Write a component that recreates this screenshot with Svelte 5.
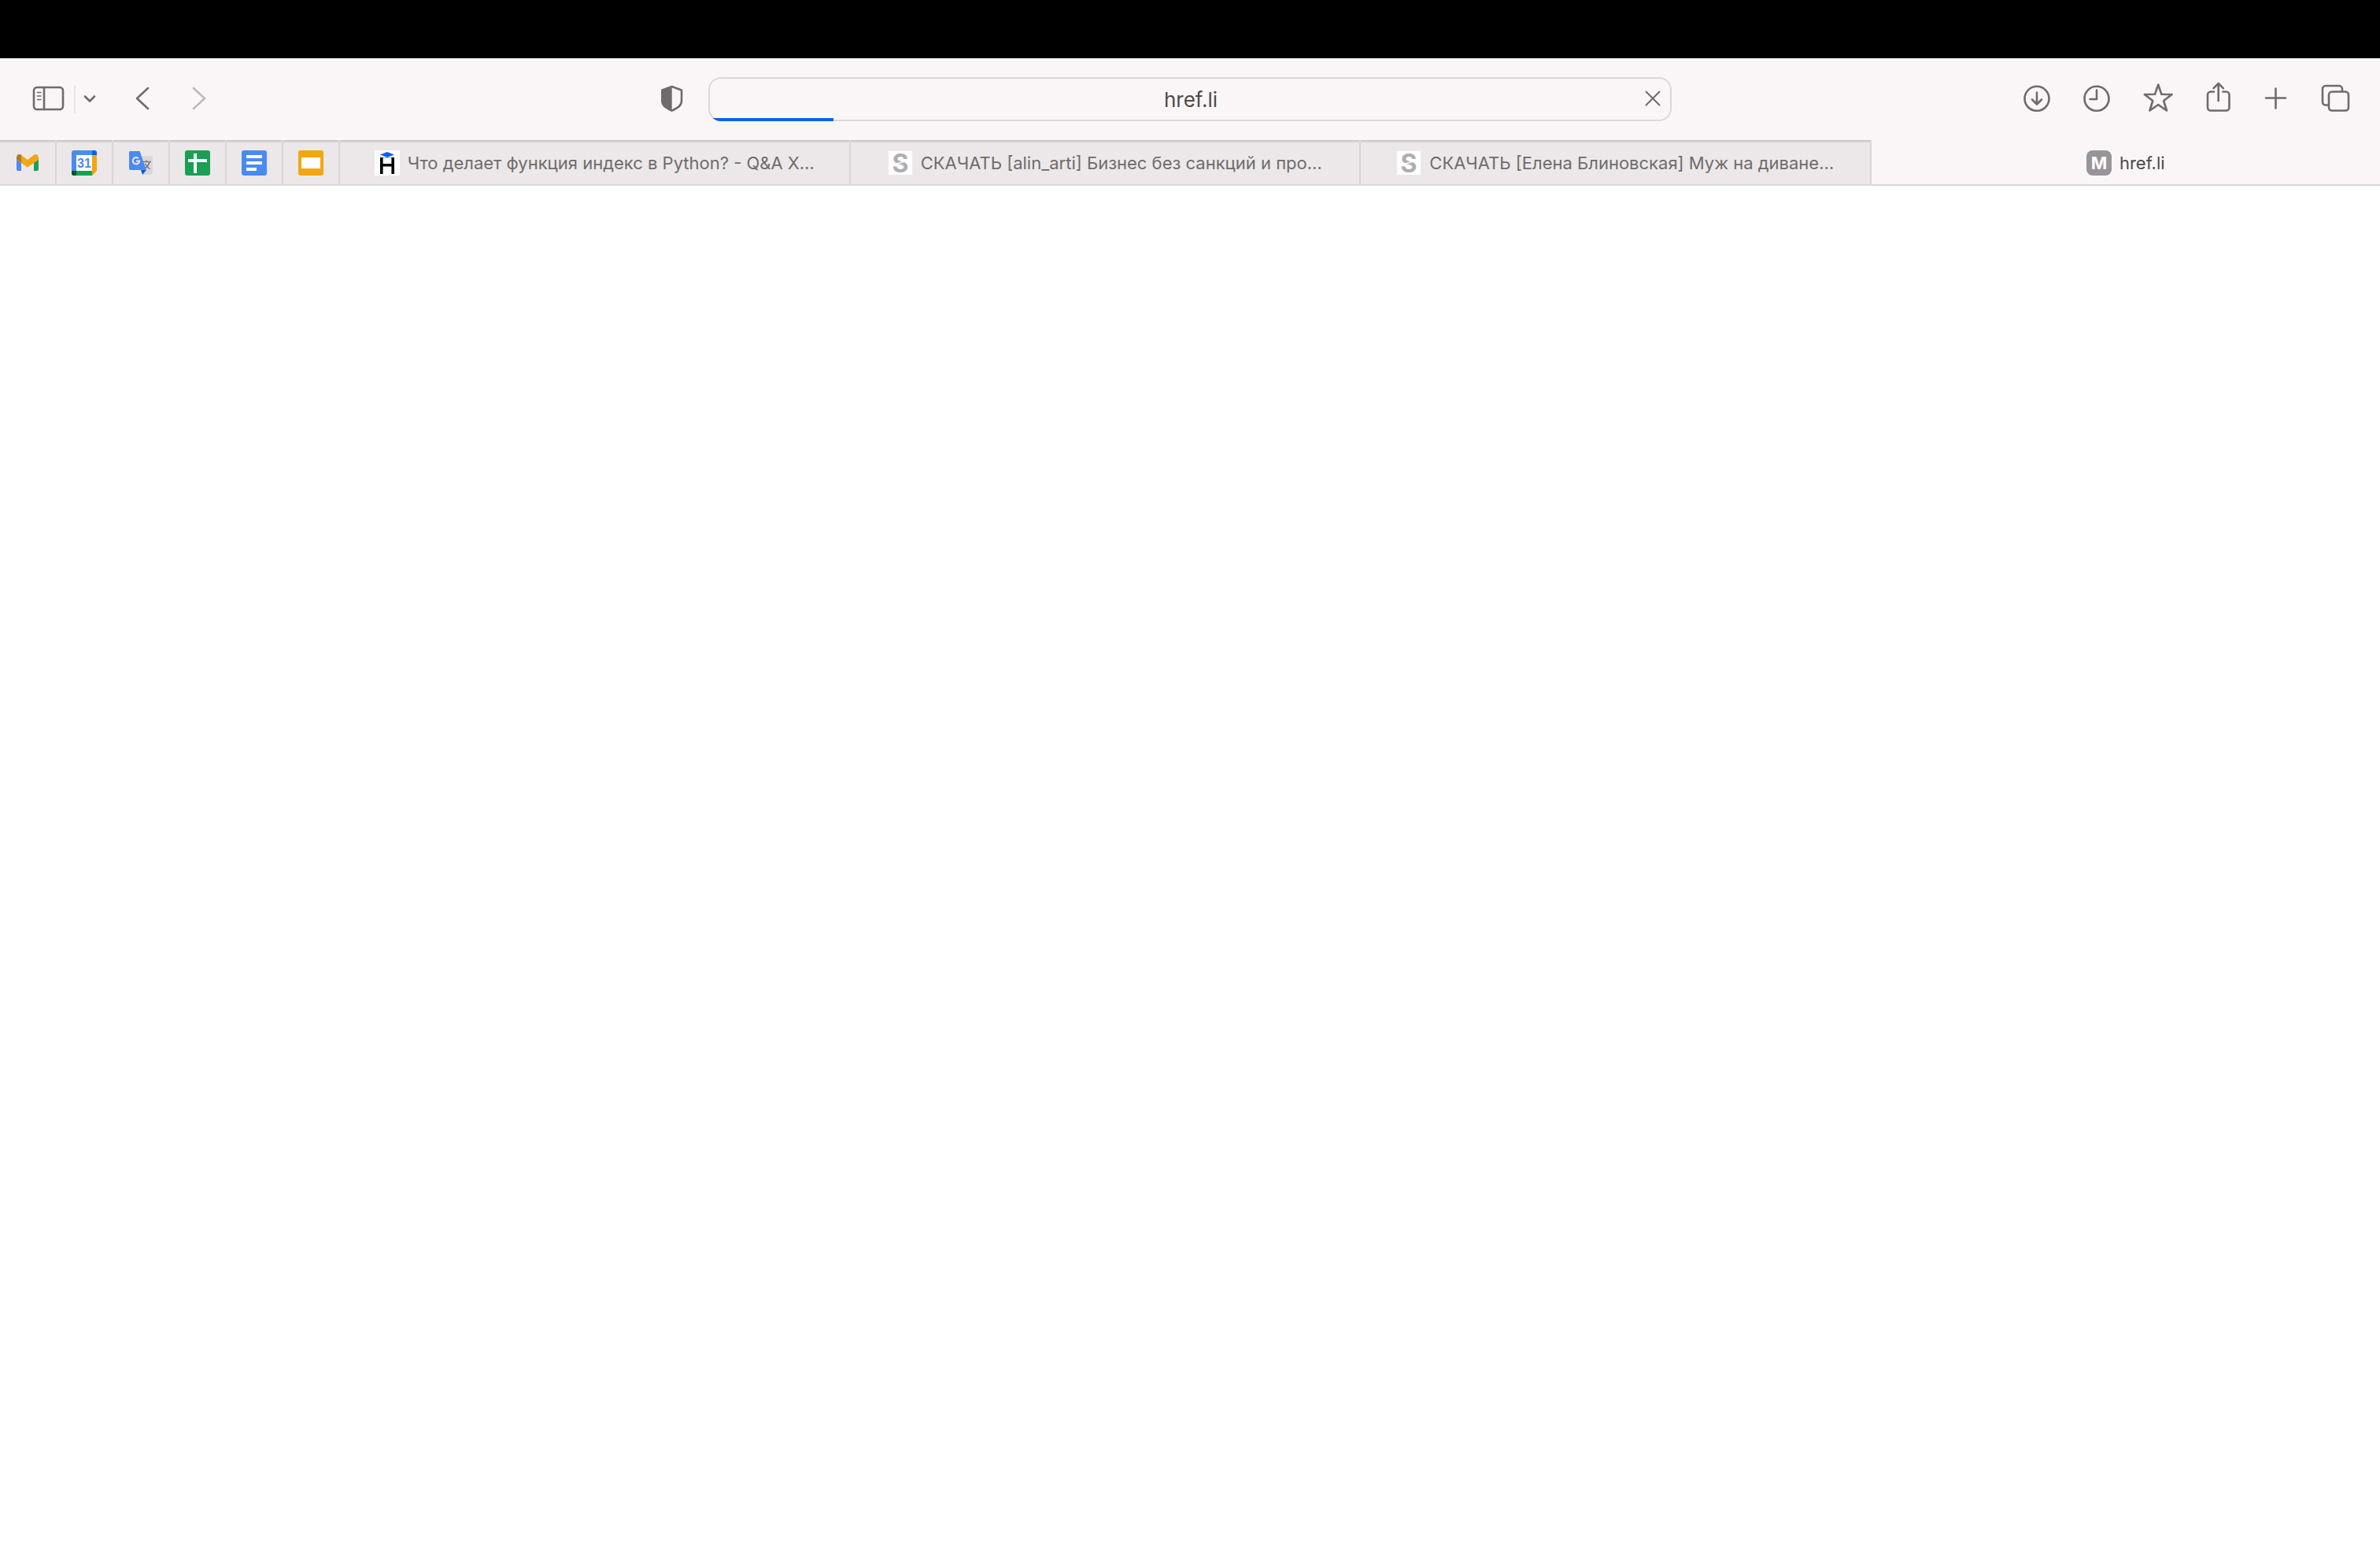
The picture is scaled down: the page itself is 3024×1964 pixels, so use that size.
<script lang="ts">
	type Tab = { id: number; title: string; icon: 'hexlet' | 'skladchik' | 'letter' };

	const pinned = ['Gmail', 'Calendar', 'Translate', 'Sheets', 'Docs', 'Slides'];

	const tabs: Tab[] = [
		{ id: 1, title: 'Что делает функция индекс в Python? - Q&A X…', icon: 'hexlet' },
		{ id: 2, title: 'СКАЧАТЬ [alin_arti] Бизнес без санкций и про…', icon: 'skladchik' },
		{ id: 3, title: 'СКАЧАТЬ [Елена Блиновская] Муж на диване…', icon: 'skladchik' },
		{ id: 4, title: 'href.li', icon: 'letter' }
	];

	let activeTabId = $state(4);
	let address = $state('href.li');
	let loaded = $state(13);
</script>

<div class="browser">
	<div class="notch"></div>

	<header class="toolbar">
		<div class="side left">
			<button class="tool" aria-label="Show sidebar">
				<svg class="icon" viewBox="0 0 44 44">
					<rect x="3" y="7" width="37" height="28" rx="4" />
					<path d="M16 7v28" />
					<path class="thin" d="M7.500 13.500h4.500M7.500 18h4.500M7.500 22.500h4.500" />
				</svg>
			</button>
			<span class="divider"></span>
			<button class="tool" aria-label="Tab groups">
				<svg class="icon small" viewBox="0 0 28 44">
					<path d="M8 18.500l6 6 6-6" />
				</svg>
			</button>
			<button class="tool back" aria-label="Back">
				<svg class="icon" viewBox="0 0 44 44"><path d="M28 8L14 21l14 13" /></svg>
			</button>
			<button class="tool forward" aria-label="Forward" disabled>
				<svg class="icon" viewBox="0 0 44 44"><path d="M14 8l14 13-14 13" /></svg>
			</button>
			<button class="tool shield" aria-label="Privacy report">
				<svg class="icon" viewBox="0 0 44 44">
					<path d="M21.700 6L34 10.500V24c0 6-4 8.500-12.300 12.700C13.400 32.500 9.300 30 9.300 24V10.500z" />
					<path class="solid" d="M21.700 6v30.700C13.400 32.500 9.300 30 9.300 24V10.500z" />
				</svg>
			</button>
		</div>

		<div class="address">
			<input aria-label="Address" bind:value={address} />
			<button class="tool stop" aria-label="Stop loading">
				<svg class="stop-icon" viewBox="0 0 24 24"><path d="M3.500 3.500l17 17M20.500 3.500l-17 17" /></svg>
			</button>
			<div class="progress" style:width="{loaded}%"></div>
		</div>

		<div class="side right">
			<button class="tool" aria-label="Downloads">
				<svg class="icon" viewBox="0 0 44 44">
					<circle cx="22" cy="21.300" r="15.500" />
					<path d="M22 13.500V28M16 22.500l6 6 6-6" />
				</svg>
			</button>
			<button class="tool" aria-label="History">
				<svg class="icon" viewBox="0 0 44 44">
					<circle cx="22" cy="21.300" r="15.500" />
					<path d="M22 10.500V22h-8.500" />
				</svg>
			</button>
			<button class="tool" aria-label="Bookmarks">
				<svg class="icon" viewBox="0 0 44 44">
					<path
						d="M24.200 3.500l4.200 12.300 13.200.2-10.500 8 3.900 12.500-10.800-7.500-10.800 7.500 3.900-12.500-10.500-8 13.200-.2z"
					/>
				</svg>
			</button>
			<button class="tool" aria-label="Share">
				<svg class="icon" viewBox="0 0 44 44">
					<path d="M19 12.500h-4a4 4 0 0 0-4 4V32.500a4 4 0 0 0 4 4h19.500a4 4 0 0 0 4-4V16.500a4 4 0 0 0-4-4h-4" />
					<path d="M24.700 24V2.500M18.500 8.200l6.200-6.200 6.200 6.200" />
				</svg>
			</button>
			<button class="tool" aria-label="New tab">
				<svg class="icon" viewBox="0 0 44 44"><path d="M21.500 8.500v25M9 20.500h25" /></svg>
			</button>
			<button class="tool" aria-label="Tab overview">
				<svg class="icon" viewBox="0 0 44 44">
					<path d="M12 29.500H9a4 4 0 0 1-4-4V9a4 4 0 0 1 4-4h17a4 4 0 0 1 4 4v3" />
					<rect x="13" y="12.500" width="25" height="24" rx="4" />
				</svg>
			</button>
		</div>
	</header>

	<nav class="tab-bar" aria-label="Tabs">
		{#each pinned as name (name)}
			<button class="pin" aria-label={name}>
				<svg class="favicon" viewBox="0 0 32 32">
					{#if name === 'Gmail'}
						<path fill="#4a8af4" d="M2 10l6 4v12H4a2 2 0 0 1-2-2z" />
						<path fill="#1a9f55" d="M24 14l6-4v14a2 2 0 0 1-2 2h-4z" />
						<path
							fill="#f4a611"
							d="M2 9.500C2 5.500 5.500 4 8.200 6L16 12l7.800-6C26.500 4 30 5.500 30 9.500V12l-14 9.500L2 12z"
						/>
						<path fill="#a87a35" d="M2 9.500C2 5.500 5.500 4 8 6v9.500l-6-4z" />
					{:else if name === 'Calendar'}
						<path fill="#4a8af4" d="M3 0h23v6H6v20H0V3a3 3 0 0 1 3-3z" />
						<path fill="#0563ea" d="M26 0h3a3 3 0 0 1 3 3v3h-6z" />
						<path fill="#f4a611" d="M26 6h6v20l-6 6z" />
						<path fill="#1a9f55" d="M0 26h26v6H3a3 3 0 0 1-3-3z" />
						<path fill="#08542b" d="M0 26h6v6H3a3 3 0 0 1-3-3z" />
						<path fill="#fff" d="M6 6h20v20H6z" />
						<text class="day" x="16" y="22" text-anchor="middle">31</text>
					{:else if name === 'Translate'}
						<path fill="#dcd8d9" d="M16 7h13a2 2 0 0 1 2 2v20a2 2 0 0 1-2 2H18z" />
						<path
							fill="none"
							stroke="#77757a"
							stroke-width="1.500"
							d="M18 14.500h11M23 12.500v2M27 14.500c-1 4-3.500 7-6.500 9M21.500 17c1.500 3 3.500 5 6 7"
						/>
						<path fill="#0b5bd0" d="M16 25h7l-5 6z" />
						<path fill="#4a8af4" d="M2 1h12.500L23 25H3a2 2 0 0 1-2-2V2z" />
						<path
							fill="none"
							stroke="#ece8e9"
							stroke-width="2"
							d="M13 10.200a4.200 4.200 0 1 0 1.200 3.300H10"
						/>
					{:else if name === 'Sheets'}
						<rect width="32" height="32" rx="3" fill="#1a9f55" />
						<path fill="#fff" d="M11 4h4v7h13v4H15v14h-4V15H4v-4h7z" />
					{:else if name === 'Docs'}
						<rect width="32" height="32" rx="3" fill="#4a8af4" />
						<path fill="#fff" d="M6 6h20v4H6zM6 14h20v4H6zM6 22h13v4H6z" />
					{:else}
						<rect width="32" height="32" rx="3" fill="#f4a611" />
						<path fill="#fff" d="M4 9h24v14H4z" />
					{/if}
				</svg>
			</button>
		{/each}

		{#each tabs as tab (tab.id)}
			<button
				class="tab"
				class:active={activeTabId === tab.id}
				onclick={() => (activeTabId = tab.id)}
			>
				{#if tab.icon === 'letter'}
					<span class="letter">M</span>
				{:else}
					<svg class="favicon" viewBox="0 0 32 32" aria-hidden="true">
						{#if tab.icon === 'hexlet'}
							<rect width="32" height="32" fill="#fff" />
							<path fill="#0563ea" d="M16 2l9 3.500L16 9 7 5.500z" />
							<path
								fill="none"
								stroke="#000"
								stroke-width="3.600"
								d="M8.800 9v21M23.200 9v21M8.800 18.800h14.400"
							/>
							<path fill="none" stroke="#000" d="M9 9.500h14" opacity=".3" />
						{:else}
							<rect x="1" y="1" width="30" height="30" fill="#fff" />
							<text class="mark" x="16" y="28" text-anchor="middle">S</text>
							<path stroke="#fff" stroke-width="1.500" d="M5 19l20-6" />
						{/if}
					</svg>
				{/if}
				<span class="title">{tab.title}</span>
			</button>
		{/each}
	</nav>

	<main class="page"></main>
</div>

<style>
	:global(body) {
		background: #fff;
	}

	.browser {
		display: flex;
		flex-direction: column;
		min-height: 100vh;
		font-family: Inter, 'Liberation Sans', sans-serif;
		color: #6f6b6c;
	}

	.notch {
		height: 74px;
		background: #000;
	}

	.toolbar {
		display: grid;
		grid-template-columns: 75fr 102fr 75fr;
		align-items: center;
		height: 104px;
		background: #faf6f7;
	}

	.side {
		display: flex;
		align-items: center;
	}

	.left {
		padding: 0 24px 0 40px;
	}

	.right {
		justify-content: flex-end;
		gap: 32px;
		padding-right: 34px;
	}

	.tool {
		display: flex;
		padding: 0;
		border: none;
		background: none;
		color: inherit;
	}

	.icon {
		width: 44px;
		height: 44px;
		fill: none;
		stroke: currentColor;
		stroke-width: 2.6;
		stroke-linecap: round;
		stroke-linejoin: round;
	}

	.icon.small {
		width: 28px;
	}

	.thin {
		stroke-width: 1.6;
	}

	.solid {
		fill: currentColor;
		stroke: none;
	}

	.divider {
		width: 2px;
		height: 36px;
		margin: 0 4px 0 10px;
		background: #e9e5e6;
	}

	.back {
		margin-left: 32px;
	}

	.forward {
		margin-left: 28px;
		color: #bdb9ba;
	}

	.shield {
		margin-left: auto;
	}

	.address {
		position: relative;
		display: flex;
		align-items: center;
		height: 56px;
		overflow: hidden;
		border-radius: 16px;
		box-shadow: inset 0 0 0 2px #dcd8d9;
	}

	.address input {
		flex: 1;
		min-width: 0;
		padding: 2px 0 0 38px;
		border: none;
		outline: none;
		background: none;
		color: #4c494a;
		font-family: inherit;
		font-size: 26px;
		line-height: 32px;
		text-align: center;
	}

	.stop {
		padding: 0 12px 2px 0;
	}

	.stop-icon {
		width: 24px;
		height: 24px;
		fill: none;
		stroke: currentColor;
		stroke-width: 2;
		stroke-linecap: round;
	}

	.progress {
		position: absolute;
		left: 0;
		bottom: 0;
		height: 4px;
		background: #0563ea;
	}

	.tab-bar {
		display: flex;
		height: 58px;
		background: #faf6f7;
	}

	.pin,
	.tab {
		display: flex;
		align-items: center;
		justify-content: center;
		box-sizing: border-box;
		border: 0 solid #dad6d7;
		border-bottom-width: 2px;
		background: #ece8e9;
		box-shadow:
			inset 0 1px #c4c0c1,
			inset 0 3px #d8d4d5;
	}

	.pin {
		flex: none;
		width: 72px;
		padding: 2px 0 0;
		border-right-width: 2px;
	}

	.tab {
		flex: 1;
		min-width: 0;
		gap: 10px;
		padding: 2px 24px 0;
		color: #6f6b6c;
		font-family: inherit;
		font-size: 22px;
		line-height: 28px;
	}

	.tab + .tab {
		border-left-width: 2px;
	}

	.tab.active {
		background: #faf6f7;
		box-shadow: none;
		color: #4c494a;
	}

	.title {
		overflow: hidden;
		white-space: nowrap;
		text-overflow: ellipsis;
	}

	.favicon,
	.letter {
		flex: none;
		width: 32px;
		height: 32px;
	}

	.favicon {
		overflow: visible;
	}

	.letter {
		border-radius: 8px;
		background: #98959a;
		color: #fff;
		font-weight: 700;
		line-height: 32px;
		text-align: center;
	}

	.day {
		fill: #4a8af4;
		font-size: 16px;
		font-weight: 600;
	}

	.mark {
		fill: #b0aeaf;
		font-size: 32px;
		font-weight: 700;
	}

	.page {
		flex: 1;
		background: #fff;
	}
</style>
